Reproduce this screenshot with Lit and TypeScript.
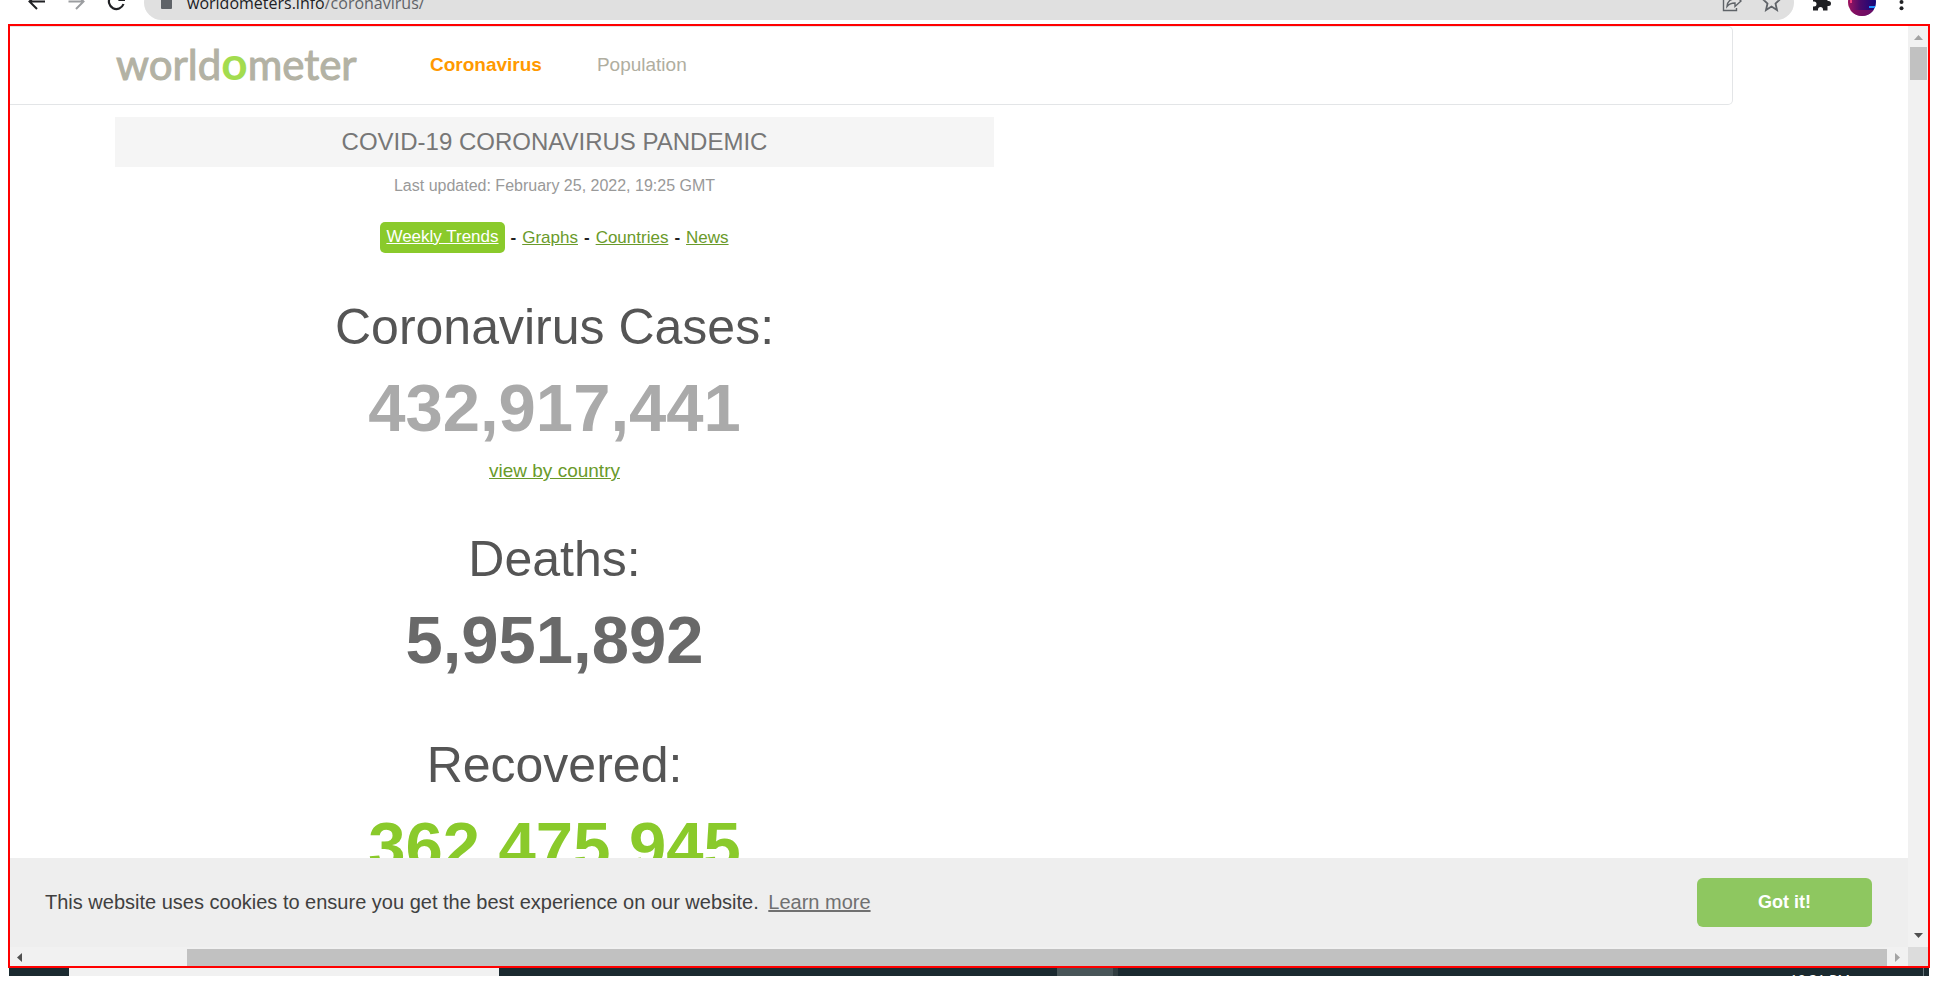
import { LitElement, html, css, nothing } from "lit";
import { customElement } from "lit/decorators.js";

interface Counter {
  label: string;
  value: string;
  tone: string;
  link?: string;
}

const counters: Counter[] = [
  { label: "Coronavirus Cases:", value: "432,917,441", tone: "cases", link: "view by country" },
  { label: "Deaths:", value: "5,951,892", tone: "deaths" },
  { label: "Recovered:", value: "362,475,945", tone: "recovered" },
];

@customElement("browser-toolbar")
class BrowserToolbar extends LitElement {
  static styles = css`
    :host {
      display: flex;
      align-items: flex-end;
      flex: none;
      height: 24px;
      overflow: hidden;
      box-sizing: border-box;
      padding: 0 28px 0 20px;
      background: #fff;
    }
    button {
      display: block;
      flex: none;
      border: 0;
      padding: 0;
      background: none;
      height: 35px;
      margin-bottom: 4px;
    }
    svg { display: block; }
    .omnibox {
      flex: 1;
      display: flex;
      align-items: center;
      height: 35px;
      margin: 0 8px 4px 4px;
      border-radius: 18px;
      background: #e0e0e0;
    }
    .omnibox button { margin: 0; }
    .url {
      flex: 1;
      margin-left: 11px;
      font: 16px/24px "Open Sans", sans-serif;
      color: #5f6368;
      text-decoration: none;
    }
    .host { color: #202124; }
  `;
  render() {
    return html`
      <button aria-label="Back">
        <svg width="40" height="35" viewBox="20 -15 40 35" fill="none" stroke="#202124" stroke-width="2"><path d="M45 1.500H30M37 -6L29.500 1.500L37 9" /></svg>
      </button>
      <button aria-label="Forward">
        <svg width="40" height="35" viewBox="60 -15 40 35" fill="none" stroke="#9b9da0" stroke-width="2"><path d="M68.500 1.500H83M76 -6L83.500 1.500L76 9" /></svg>
      </button>
      <button aria-label="Reload">
        <svg width="40" height="35" viewBox="100 -15 40 35"><path d="M123.500 4A7.500 7.500 0 1 1 121.500 -4" fill="none" stroke="#202124" stroke-width="2.200" /><path d="M125 -8V1H118Z" fill="#202124" /></svg>
      </button>
      <div class="omnibox">
        <button aria-label="Site information">
          <svg width="32" height="35" viewBox="144 -15 32 35"><rect x="161" y="-1" width="11" height="10" rx="1" fill="#5f6368" /><path d="M163.500 0V-3a3 3 0 0 1 6 0V0" fill="none" stroke="#5f6368" stroke-width="1.500" /></svg>
        </button>
        <a class="url" href="#"><span class="host">worldometers.info</span>/coronavirus/</a>
        <button aria-label="Share">
          <svg width="40" height="35" viewBox="1714 -15 40 35" fill="none" stroke="#5f6368" stroke-width="1.400"><path d="M1727 -3H1723.500V10.500H1736.500V8" /><path d="M1727 6.500C1727.500 1 1730 -1 1735 -1V-5L1741 1L1735 6.500V3C1731 3 1729 4 1727 6.500Z" /></svg>
        </button>
        <button aria-label="Bookmark this page">
          <svg width="40" height="35" viewBox="1754 -15 40 35" fill="none" stroke="#5f6368" stroke-width="1.800"><path d="M1771.500 -7L1774 -1.200L1780 -.7L1775.500 3.500L1777 10L1771.500 6.500L1766 10L1767.500 3.500L1763 -.7L1769 -1.200Z" /></svg>
        </button>
      </div>
      <button aria-label="Extensions">
        <svg width="38" height="35" viewBox="1802 -15 38 35" fill="#202124"><path d="M1813 -4H1817V-5.500a2.500 2.500 0 0 1 5 0V-4H1827.500V1H1828.500a2.500 2.500 0 0 1 0 5H1827.500V10.500H1823V9.500a2.500 2.500 0 0 0 -5 0V10.500H1813V6.500H1814a2.500 2.500 0 0 0 0 -5H1813Z" /></svg>
      </button>
      <button aria-label="Profile">
        <svg width="45" height="35" viewBox="1840 -15 45 35">
          <defs>
            <linearGradient id="av" x1="0" x2="1"><stop offset="0" stop-color="#a01560" /><stop offset=".45" stop-color="#4a0a6a" /><stop offset="1" stop-color="#14067a" /></linearGradient>
            <clipPath id="disc"><circle cx="1862" cy="2" r="14" /></clipPath>
          </defs>
          <g clip-path="url(#disc)"><rect x="1848" y="-12" width="28" height="28" fill="url(#av)" /><path d="M1848 10H1876V16H1848Z" fill="#8a1060" opacity=".7" /><path d="M1850 0h2v3h-2z" fill="#f04080" /><path d="M1869 6h7v2h-7z" fill="#1e90ff" /></g>
        </svg>
      </button>
      <button aria-label="Menu">
        <svg width="25" height="35" viewBox="1885 -15 25 35" fill="#202124"><circle cx="1901.500" cy="-4" r="2" /><circle cx="1901.500" cy="2" r="2" /><circle cx="1901.500" cy="8.300" r="2" /></svg>
      </button>
    `;
  }
}

@customElement("scroll-track")
class ScrollTrack extends LitElement {
  static properties = { vertical: { type: Boolean, reflect: true } };
  static styles = css`
    :host {
      display: flex;
      align-items: center;
      background: #f1f1f1;
      box-sizing: border-box;
      padding: 2px 8px 0 7px;
    }
    :host([vertical]) { flex-direction: column; padding: 9px 0; }
    svg { display: block; flex: none; }
    .rail { flex: 1; align-self: stretch; display: flex; margin: 0 8px 0 0; }
    .thumb { background: #c1c1c1; }
    .across { flex: 1; margin-left: 165px; }
    :host([vertical]) .rail { margin: 7px 0; justify-content: center; }
    .down { width: 17px; height: 33px; }
  `;
  declare vertical: boolean;
  render() {
    return this.vertical
      ? html`<svg width="9" height="5" viewBox="0 0 9 5"><path d="M0 5L4.500 0L9 5Z" fill="#a3a3a3" /></svg>
          <div class="rail"><div class="thumb down"></div></div>
          <svg width="9" height="5" viewBox="0 0 9 5"><path d="M0 0L4.500 5L9 0Z" fill="#505050" /></svg>`
      : html`<svg width="5" height="9" viewBox="0 0 5 9"><path d="M5 0L0 4.500L5 9Z" fill="#505050" /></svg>
          <div class="rail"><div class="thumb across"></div></div>
          <svg width="5" height="9" viewBox="0 0 5 9"><path d="M0 0L5 4.500L0 9Z" fill="#a3a3a3" /></svg>`;
  }
}

@customElement("app-root")
class AppRoot extends LitElement {
  static styles = css`
    :host {
      display: flex;
      flex-direction: column;
      height: 100vh;
      box-sizing: border-box;
      padding-bottom: 16px;
      background: #fff;
      overflow: hidden;
      font-family: "Liberation Sans", Arial, sans-serif;
    }
    .frame {
      flex: 1;
      min-height: 0;
      margin: 0 8px;
      border: 2px solid #f00;
      display: grid;
      grid-template: minmax(0, 1fr) 19px / minmax(0, 1fr) 20px;
    }
    .viewport { position: relative; overflow: hidden; }
    .corner { background: #dcdcdc; }

    .nav {
      display: flex;
      align-items: center;
      height: 77px;
      margin-right: 175px;
      padding-left: 106px;
      border: 1px solid #e3e5e7;
      border-left: 0;
      border-radius: 0 5px 5px 0;
    }
    .nav a { text-decoration: none; padding-bottom: 2px; }
    .nav .logo {
      width: 314px;
      padding-bottom: 4px;
      font: 42px/52px Lato, sans-serif;
      color: #b3b2a4;
      -webkit-text-stroke: 1px #b3b2a4;
    }
    .logo b { color: #a3dc4f; font-size: 46px; line-height: 1; -webkit-text-stroke: 0; }
    .item { font-size: 19px; line-height: 28px; color: #b0aea0; margin-right: 55px; }
    .item.active { color: #ff9900; font-weight: bold; }

    main { width: 879px; max-width: 100%; margin: 12px 0 0 105px; text-align: center; }
    .title {
      margin: 0;
      background: #f5f5f5;
      color: #777;
      font-size: 24px;
      font-weight: normal;
      line-height: 50px;
    }
    .updated { margin: 7px 0 24px; font-size: 16px; line-height: 24px; color: #999; }
    .links { display: flex; justify-content: center; gap: 6px; font-size: 17px; line-height: 31px; margin-bottom: 44px; }
    .links a, .more { color: #6a9a2a; }
    .links b { color: #222; }
    .links .trend {
      padding: 0 6px 1px;
      border-radius: 5px;
      background: #8aca2b;
      color: #fff;
      line-height: 29px;
    }
    .counter { margin-bottom: 55px; }
    .counter.linked { margin-bottom: 45px; }
    .counter h1 { margin: 0 0 11px; font-size: 50px; line-height: 60px; font-weight: normal; color: #555; }
    .value { font-size: 67px; line-height: 80px; font-weight: bold; }
    .cases { color: #aaa; }
    .deaths { color: #696969; }
    .recovered { color: #8aca2b; }
    .more { display: block; margin-top: 9px; font-size: 19px; line-height: 27px; }

    .consent {
      position: absolute;
      left: 0;
      right: 0;
      bottom: 0;
      display: flex;
      align-items: center;
      padding: 20px 36px 20px 35px;
      background: #eee;
      color: #404040;
      font-size: 20px;
      line-height: 30px;
    }
    .message { flex: 1; padding-bottom: 2px; }
    .message a { margin-left: 4px; color: #707070; text-decoration-thickness: 2px; }
    .accept {
      width: 175px;
      height: 49px;
      border: 0;
      border-radius: 6px;
      background: #8ec760;
      color: #fff;
      font: bold 18px/27px "Liberation Sans", Arial, sans-serif;
    }

    .taskbar { flex: none; display: flex; height: 8px; margin: 0 9px; background: #1b2a30; overflow: hidden; }
    .search { width: 430px; margin-left: 60px; background: #f1f1f1; }
    .task { width: 56px; margin-left: 558px; background: #485558; border-right: 5px solid #303d40; }
    .clock { margin-left: auto; padding: 2px 73px 0 0; font: 14px/20px "Open Sans", sans-serif; color: #fff; }
    .peek { width: 5px; border-left: 1px solid #66757a; }
  `;
  render() {
    return html`
      <browser-toolbar></browser-toolbar>
      <div class="frame">
        <div class="viewport">
          <nav class="nav">
            <a class="logo" href="#">world<b>o</b>meter</a>
            <a class="item active" href="#">Coronavirus</a>
            <a class="item" href="#">Population</a>
          </nav>
          <main>
            <h2 class="title">COVID-19 CORONAVIRUS PANDEMIC</h2>
            <div class="updated">Last updated: February 25, 2022, 19:25 GMT</div>
            <div class="links">
              <a class="trend" href="#">Weekly Trends</a><b>-</b><a href="#">Graphs</a><b>-</b><a href="#">Countries</a><b>-</b><a href="#">News</a>
            </div>
            ${counters.map(
              (c) => html`<section class="counter ${c.link ? "linked" : ""}">
                <h1>${c.label}</h1>
                <div class="value ${c.tone}">${c.value}</div>
                ${c.link ? html`<a class="more" href="#">${c.link}</a>` : nothing}
              </section>`
            )}
          </main>
          <div class="consent" role="dialog" aria-label="Cookie consent">
            <div class="message">This website uses cookies to ensure you get the best experience on our website. <a href="#">Learn more</a></div>
            <button class="accept">Got it!</button>
          </div>
        </div>
        <scroll-track vertical></scroll-track>
        <scroll-track></scroll-track>
        <div class="corner"></div>
      </div>
      <div class="taskbar">
        <div class="search"></div>
        <div class="task"></div>
        <div class="clock">10:31 PM</div>
        <div class="peek"></div>
      </div>
    `;
  }
}
